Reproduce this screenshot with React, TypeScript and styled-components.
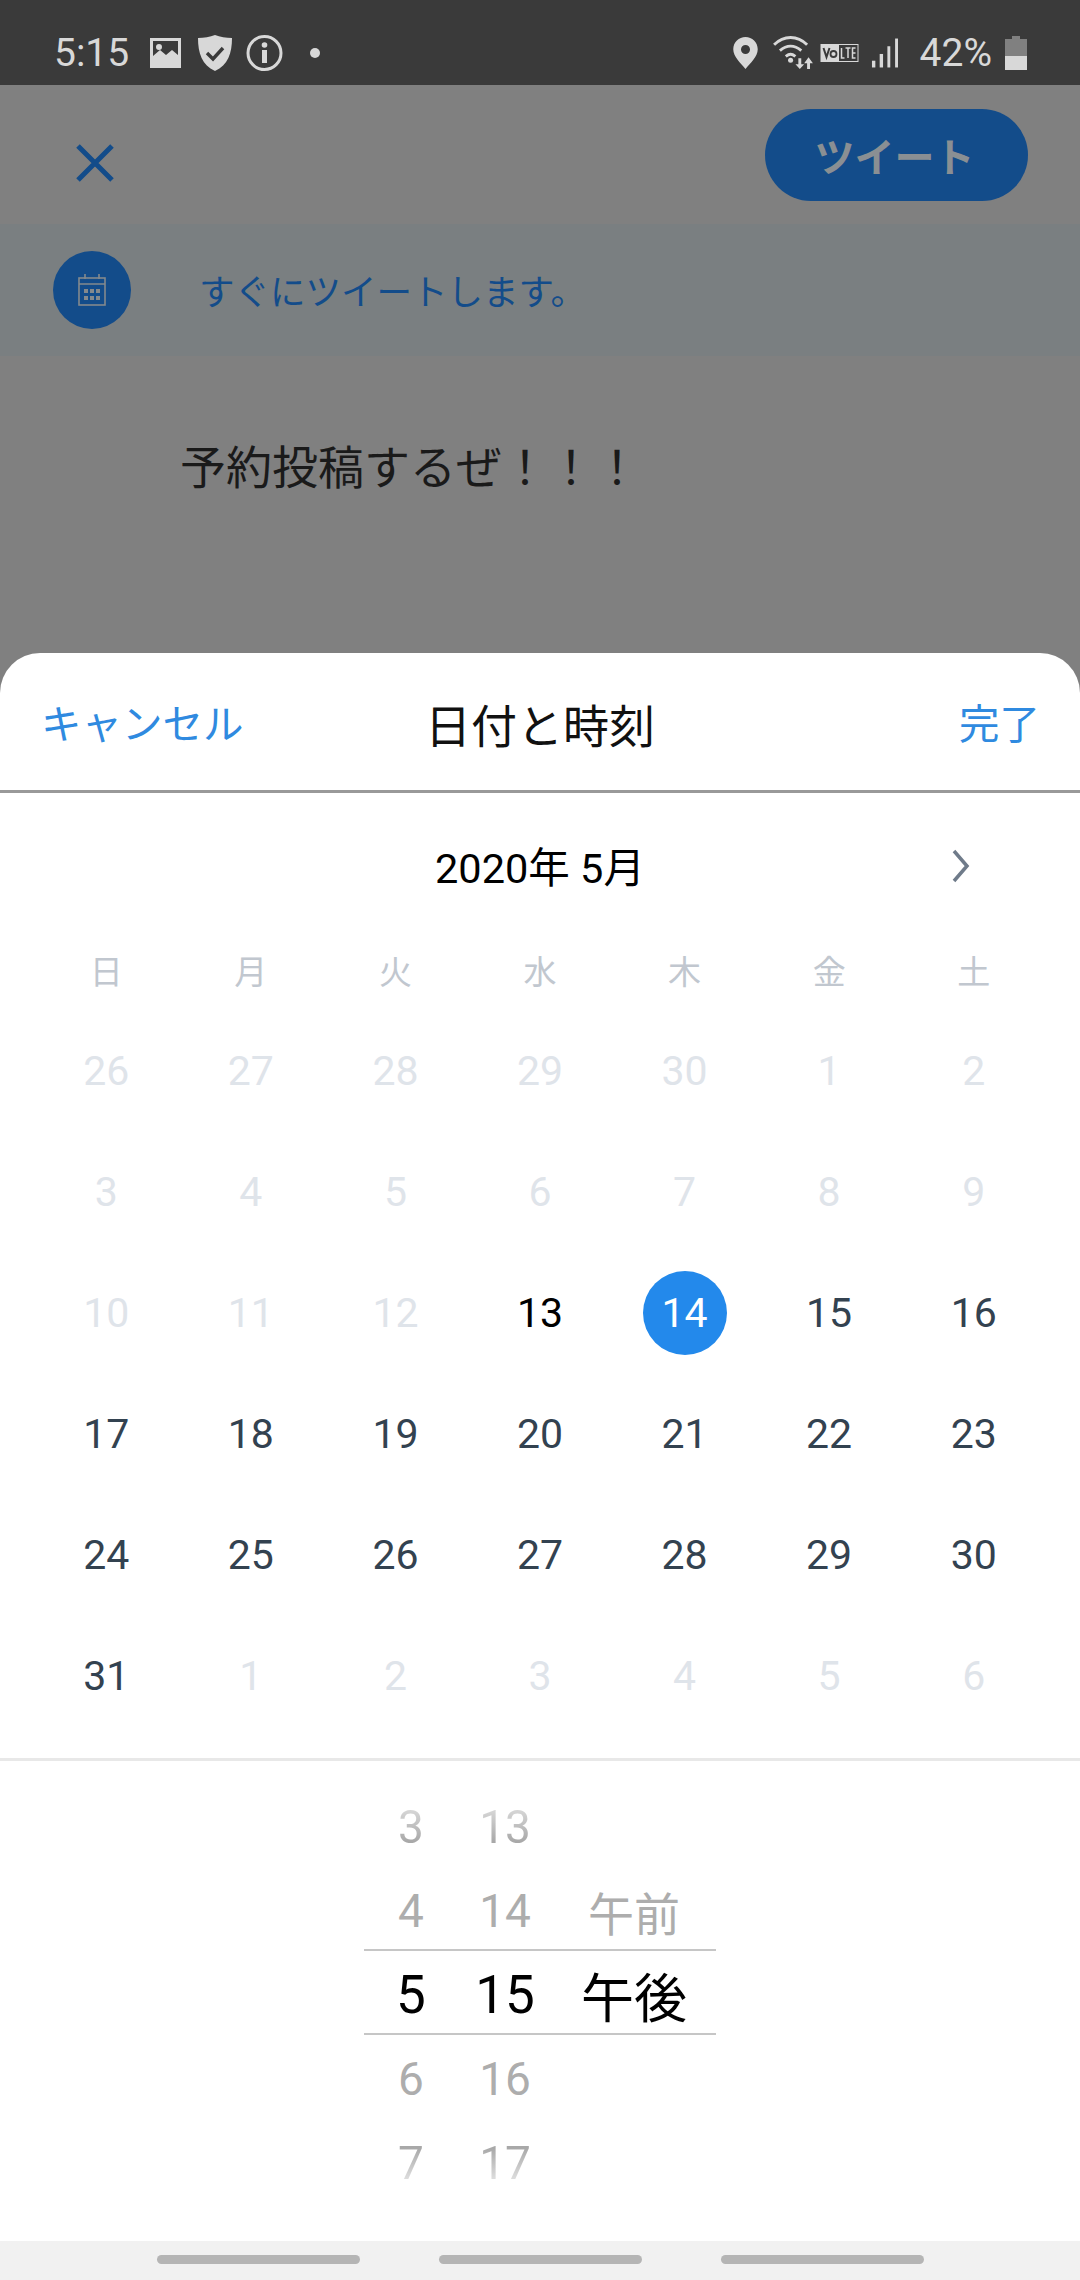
import React from 'react';
import styled, { createGlobalStyle, css } from 'styled-components';

const JP = '"Noto Sans CJK JP", "Noto Sans", sans-serif';
const NUM = 'Roboto, "Noto Sans CJK JP", sans-serif';

const GlobalStyle = createGlobalStyle`
	html, body { margin: 0; padding: 0; background: #808080; }
	body { font-family: ${JP}; }
	* { box-sizing: border-box; }
`;

const Page = styled.div`
	width: 1080px;
	height: 2280px;
	display: flex;
	flex-direction: column;
	overflow: hidden;
	background: #808080;
`;

const StatusBar = styled.div`
	height: 85px;
	flex: none;
	background: #3a3a3a;
	display: flex;
	align-items: center;
	justify-content: space-between;
	padding: 20px 53px 0 54px;
	color: #d8d8d8;
`;

const StatusGroup = styled.div`
	display: flex;
	align-items: center;
`;

const StatusText = styled.span<{ $gap?: number }>`
	font-family: ${NUM};
	font-size: 39px;
	line-height: 42px;
	color: #d8d8d8;
	margin-left: ${(p) => p.$gap ?? 0}px;
`;

const StatusIcon = styled.svg<{ $gap?: number }>`
	display: block;
	flex: none;
	margin-left: ${(p) => p.$gap ?? 0}px;
`;

const TopBar = styled.div`
	height: 139px;
	flex: none;
	display: flex;
	align-items: flex-start;
	justify-content: space-between;
	padding: 24px 52px 0 72px;
`;

const CloseButton = styled.div`
	margin-top: 31px;
	width: 46px;
	height: 46px;
`;

const TweetButton = styled.div`
	width: 263px;
	height: 92px;
	border-radius: 46px;
	background: #134c8a;
	color: #8a8f93;
	font-size: 40px;
	font-weight: 700;
	padding-right: 4px;
	display: flex;
	align-items: center;
	justify-content: center;
`;

const Banner = styled.div`
	height: 132px;
	flex: none;
	background: #7a7f81;
	display: flex;
	align-items: center;
	padding-left: 53px;
`;

const BannerIcon = styled.div`
	width: 78px;
	height: 78px;
	border-radius: 50%;
	background: #134c8a;
	display: flex;
	align-items: center;
	justify-content: center;
`;

const BannerText = styled.div`
	margin-left: 68px;
	font-size: 35.5px;
	color: #134c8a;
	line-height: 50px;
`;

const Compose = styled.div`
	height: 297px;
	flex: none;
	padding: 75px 0 0 180px;
	font-size: 46px;
	line-height: 66px;
	color: #1a1a1a;
`;

const Sheet = styled.div`
	flex: 1;
	background: #fff;
	border-radius: 40px 40px 0 0;
	display: flex;
	flex-direction: column;
`;

const SheetHeader = styled.div`
	height: 140px;
	flex: none;
	border-bottom: 3px solid #999;
	display: flex;
	align-items: center;
	justify-content: space-between;
	padding: 0 40px 0 41px;
	position: relative;
`;

const HeaderLink = styled.div`
	font-size: 40.5px;
	line-height: 60px;
	color: #2f8ae0;
`;

const HeaderTitle = styled.div`
	font-size: 46px;
	line-height: 60px;
	color: #111;
	position: absolute;
	left: 0;
	right: 0;
	top: 40px;
	text-align: center;
`;

const MonthRow = styled.div`
	height: 147px;
	flex: none;
	display: flex;
	align-items: center;
	justify-content: center;
	padding-bottom: 3px;
	position: relative;
	font-family: ${NUM};
	font-size: 41.5px;
	color: #000;
`;

const NextMonth = styled.div`
	position: absolute;
	right: 107px;
	top: 53px;
	width: 24px;
	height: 38px;
`;

const Grid = styled.div`
	display: grid;
	grid-template-columns: repeat(7, 1fr);
	padding: 0 34px;
	flex: none;
`;

const WeekDay = styled.div`
	height: 60px;
	margin-bottom: 10px;
	display: flex;
	align-items: center;
	justify-content: center;
	font-size: 33px;
	color: #c1c7cf;
`;

type Tone = 'muted' | 'today' | 'normal' | 'selected';

const DayCell = styled.div`
	height: 121px;
	display: flex;
	align-items: center;
	justify-content: center;
`;

const dayColors: Record<Tone, string> = {
	muted: '#dfe4ea',
	today: '#000000',
	normal: '#334250',
	selected: '#ffffff',
};

const DayNumber = styled.div<{ $tone: Tone }>`
	width: 84px;
	height: 84px;
	border-radius: 50%;
	display: flex;
	align-items: center;
	justify-content: center;
	font-family: ${NUM};
	font-size: 41px;
	color: ${(p) => dayColors[p.$tone]};
	background: ${(p) => (p.$tone === 'selected' ? '#2389eb' : 'transparent')};
`;

const Divider = styled.div`
	height: 3px;
	flex: none;
	background: #e8e8e8;
	margin-top: 22px;
`;

const Picker = styled.div`
	flex: 1;
	display: flex;
	justify-content: center;
	padding-top: 24px;
	position: relative;
`;

const SelectionBand = styled.div`
	position: absolute;
	left: 364px;
	width: 352px;
	top: 188px;
	height: 86px;
	border-top: 2px solid #c6c6c6;
	border-bottom: 2px solid #c6c6c6;
`;

const Wheel = styled.div<{ $width: number }>`
	width: ${(p) => p.$width}px;
	display: flex;
	flex-direction: column;
	align-items: center;
`;

const fadedText = (gradient: string) => css`
	background: linear-gradient(${gradient});
	-webkit-background-clip: text;
	background-clip: text;
	color: transparent;
`;

const WheelItem = styled.div<{ $active?: boolean; $fade?: 'top' | 'bottom' }>`
	height: 84px;
	display: flex;
	align-items: center;
	font-family: ${NUM};
	font-size: ${(p) => (p.$active ? 53 : 46)}px;
	color: ${(p) => (p.$active ? '#000' : '#adadad')};
	${(p) => p.$fade === 'top' && fadedText('#d4d4d4 32%, #a8a8a8 68%')}
	${(p) => p.$fade === 'bottom' && fadedText('#a8a8a8 32%, #dcdcdc 68%')}
`;

const NavBar = styled.div`
	height: 39px;
	flex: none;
	background: #f1f1f1;
	display: flex;
	justify-content: center;
	gap: 79px;
	padding-top: 14px;
`;

const NavPill = styled.div`
	width: 203px;
	height: 9px;
	border-radius: 5px;
	background: #b5b5b5;
`;

const rows: [string, Tone][][] = [
	[['26', 'muted'], ['27', 'muted'], ['28', 'muted'], ['29', 'muted'], ['30', 'muted'], ['1', 'muted'], ['2', 'muted']],
	[['3', 'muted'], ['4', 'muted'], ['5', 'muted'], ['6', 'muted'], ['7', 'muted'], ['8', 'muted'], ['9', 'muted']],
	[['10', 'muted'], ['11', 'muted'], ['12', 'muted'], ['13', 'today'], ['14', 'selected'], ['15', 'normal'], ['16', 'normal']],
	[['17', 'normal'], ['18', 'normal'], ['19', 'normal'], ['20', 'normal'], ['21', 'normal'], ['22', 'normal'], ['23', 'normal']],
	[['24', 'normal'], ['25', 'normal'], ['26', 'normal'], ['27', 'normal'], ['28', 'normal'], ['29', 'normal'], ['30', 'normal']],
	[['31', 'normal'], ['1', 'muted'], ['2', 'muted'], ['3', 'muted'], ['4', 'muted'], ['5', 'muted'], ['6', 'muted']],
];

const weekDays = ['日', '月', '火', '水', '木', '金', '土'];

function LeftStatusIcons() {
	return (
		<>
			<StatusIcon $gap={21} width="31" height="30" viewBox="0 0 31 30">
				<path fill="#d8d8d8" fillRule="evenodd" d="M0 0h31v30H0zM3 3v15l7-6 6 5 6-5 6 5V3zM9 6a3 3 0 1 1 0 6 3 3 0 0 1 0-6z" />
			</StatusIcon>
			<StatusIcon $gap={17} width="34" height="36" viewBox="0 0 34 36">
				<path fill="#d8d8d8" d="M17 0c5 2 11 3 17 3 0 15-4 27-17 33C4 30 0 18 0 3c6 0 12-1 17-3z" />
				<path fill="none" stroke="#3a3a3a" strokeWidth="3.4" d="M9 18l6 6 10-11" />
			</StatusIcon>
			<StatusIcon $gap={14} width="37" height="38" viewBox="0 0 37 38">
				<circle cx="18.500" cy="19" r="16.500" fill="none" stroke="#d8d8d8" strokeWidth="3" />
				<circle cx="18.500" cy="11" r="2.800" fill="#d8d8d8" />
				<rect x="16" y="16" width="5" height="13" fill="#d8d8d8" />
			</StatusIcon>
			<StatusIcon $gap={27} width="10" height="10" viewBox="0 0 10 10">
				<circle cx="5" cy="5" r="5" fill="#d8d8d8" />
			</StatusIcon>
		</>
	);
}

function RightStatusIcons() {
	return (
		<>
			<StatusIcon width="25" height="32" viewBox="0 0 26 34">
				<path fill="#d8d8d8" fillRule="evenodd" d="M13 0c7 0 13 5.500 13 13 0 8-8 15-13 21C8 28 0 21 0 13 0 5.500 6 0 13 0zm0 8.500a4.800 4.800 0 1 0 0 9.600 4.800 4.800 0 0 0 0-9.600z" />
			</StatusIcon>
			<StatusIcon $gap={15} width="41" height="33" viewBox="0 0 42 34">
				<g fill="none" stroke="#d8d8d8" strokeWidth="3">
					<path d="M1 9c10-10 24-10 34 0" />
					<path d="M7 15c7-6 15-6 22 0" />
					<path d="M13 21c4-3 6-3 10 0" />
				</g>
				<circle cx="18" cy="25" r="2.600" fill="#d8d8d8" />
				<path fill="#d8d8d8" d="M26 23h3v6h3l-4.500 5L23 29h3zM38 34h-3v-6h-3l4.500-6 4.500 6h-3z" />
			</StatusIcon>
			<StatusIcon $gap={6} width="39" height="18" viewBox="0 0 38 18">
				<rect x="0.500" y="0.500" width="37" height="17" fill="#3a3a3a" stroke="#d8d8d8" />
				<rect x="0.500" y="0.500" width="18" height="17" fill="#d8d8d8" />
				<path fill="none" stroke="#3a3a3a" strokeWidth="2" d="M3 4l3 9 3-9" />
				<circle cx="13" cy="10" r="3" fill="none" stroke="#3a3a3a" strokeWidth="1.800" />
				<path fill="none" stroke="#d8d8d8" strokeWidth="1.500" d="M21 4v10h3M25 4h5M27.500 4v10M35 4h-3v10h3M32 9h3" />
			</StatusIcon>
			<StatusIcon $gap={12} width="27" height="32" viewBox="0 0 28 32">
				<rect x="1" y="24" width="3.500" height="7" fill="#d8d8d8" />
				<rect x="9" y="17" width="3.500" height="14" fill="#d8d8d8" />
				<rect x="17" y="9" width="3" height="22" fill="#d8d8d8" />
				<rect x="25" y="1" width="3" height="30" fill="#d8d8d8" />
			</StatusIcon>
			<StatusText $gap={22}>42%</StatusText>
			<StatusIcon $gap={13} width="22" height="34" viewBox="0 0 22 34">
				<path fill="#808080" d="M7 0h8v3h7v17H0V3h7z" />
				<rect y="20" width="22" height="14" fill="#d8d8d8" />
			</StatusIcon>
		</>
	);
}

export default function App() {
	return (
		<Page>
			<GlobalStyle />
			<StatusBar>
				<StatusGroup>
					<StatusText>5:15</StatusText>
					<LeftStatusIcons />
				</StatusGroup>
				<StatusGroup>
					<RightStatusIcons />
				</StatusGroup>
			</StatusBar>
			<TopBar>
				<CloseButton>
					<svg width="46" height="46" viewBox="0 0 46 46">
						<path stroke="#134c8a" strokeWidth="5" fill="none" d="M6 6l34 34M40 6L6 40" />
					</svg>
				</CloseButton>
				<TweetButton>ツイート</TweetButton>
			</TopBar>
			<Banner>
				<BannerIcon>
					<svg width="28" height="32" viewBox="0 0 28 32">
						<rect x="1" y="4" width="26" height="27" fill="none" stroke="#84898d" strokeWidth="1.600" />
						<path stroke="#84898d" strokeWidth="1.600" d="M1 10h26M7 0v5M21 0v5" />
						<g fill="#84898d">
							<rect x="6" y="15" width="4" height="4" />
							<rect x="12" y="15" width="4" height="4" />
							<rect x="18" y="15" width="4" height="4" />
							<rect x="6" y="22" width="4" height="4" />
							<rect x="12" y="22" width="4" height="4" />
							<rect x="18" y="22" width="4" height="4" />
						</g>
					</svg>
				</BannerIcon>
				<BannerText>すぐにツイートします。</BannerText>
			</Banner>
			<Compose>予約投稿するぜ！！！</Compose>
			<Sheet>
				<SheetHeader>
					<HeaderLink>キャンセル</HeaderLink>
					<HeaderTitle>日付と時刻</HeaderTitle>
					<HeaderLink>完了</HeaderLink>
				</SheetHeader>
				<MonthRow>
					2020年 5月
					<NextMonth>
						<svg width="24" height="38" viewBox="0 0 24 38">
							<path fill="none" stroke="#6f7b8a" strokeWidth="3.500" d="M5 4l13 15-13 15" />
						</svg>
					</NextMonth>
				</MonthRow>
				<Grid>
					{weekDays.map((d) => (
						<WeekDay key={d}>{d}</WeekDay>
					))}
					{rows.flat().map(([label, tone], i) => (
						<DayCell key={i}>
							<DayNumber $tone={tone}>{label}</DayNumber>
						</DayCell>
					))}
				</Grid>
				<Divider />
				<Picker>
					<SelectionBand />
					<Wheel $width={88}>
						<WheelItem $fade="top">3</WheelItem>
						<WheelItem>4</WheelItem>
						<WheelItem $active>5</WheelItem>
						<WheelItem>6</WheelItem>
						<WheelItem $fade="bottom">7</WheelItem>
					</Wheel>
					<Wheel $width={100}>
						<WheelItem $fade="top">13</WheelItem>
						<WheelItem>14</WheelItem>
						<WheelItem $active>15</WheelItem>
						<WheelItem>16</WheelItem>
						<WheelItem $fade="bottom">17</WheelItem>
					</Wheel>
					<Wheel $width={158}>
						<WheelItem />
						<WheelItem>午前</WheelItem>
						<WheelItem $active>午後</WheelItem>
					</Wheel>
				</Picker>
				<NavBar>
					<NavPill />
					<NavPill />
					<NavPill />
				</NavBar>
			</Sheet>
		</Page>
	);
}
